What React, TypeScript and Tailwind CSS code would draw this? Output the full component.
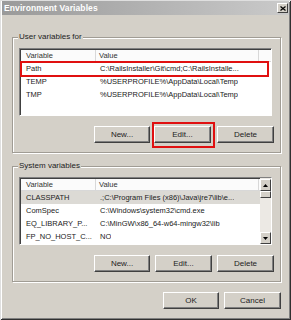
import React from "react";

const font = { fontFamily: '"Liberation Sans", Arial, sans-serif' };

function Btn({ label, w, className = "" }: { label: string; w: string; className?: string }) {
  return (
    <div
      className={`${w} h-[17px] flex items-center justify-center bg-[#d4d0c8] text-[8px] text-[#222] border border-t-white border-l-white border-r-[#404040] border-b-[#404040] shadow-[inset_-1px_-1px_0_#808080] ${className}`}
    >
      {label}
    </div>
  );
}

function ListBox({
  rows,
  selected,
  scroll,
  redBox,
}: {
  rows: [string, string][];
  selected?: number;
  scroll?: boolean;
  redBox?: boolean;
}) {
  return (
    <div className="relative w-[253px] h-[68px] bg-white border border-t-[#808080] border-l-[#808080] border-r-white border-b-white shadow-[inset_1px_1px_0_#404040] overflow-hidden flex">
      <div className="flex-1 flex flex-col pt-[1px] pl-[1px]">
        <div className="h-[12px] flex text-[7.5px] text-[#333] bg-[#fbfbfb] border-b border-[#d8d8d8]">
          <div className="w-[75px] pl-[5px] flex items-center border-r border-[#d8d8d8]">Variable</div>
          <div className="w-[163px] pl-[3px] flex items-center border-r border-[#d8d8d8]">Value</div>
          <div className="flex-1" />
        </div>
        {rows.map(([k, v], i) => (
          <div
            key={i}
            className={`h-[13px] flex items-center text-[7.5px] text-[#222] whitespace-nowrap ${
              selected === i ? "bg-[#dcdad5]" : ""
            }`}
          >
            <div className="w-[76px] pl-[5px] overflow-hidden">{k}</div>
            <div className="pl-[3px] overflow-hidden">{v}</div>
          </div>
        ))}
      </div>
      {scroll && (
        <div className="w-[11px] h-full bg-[#ece9e4] flex flex-col justify-between pt-[1px]">
          <div className="flex flex-col">
            <div className="h-[12px] bg-[#d4d0c8] border border-t-white border-l-white border-r-[#404040] border-b-[#404040] flex items-center justify-center">
              <svg width="5" height="3" viewBox="0 0 5 3"><path d="M2.5 0L5 3H0z" fill="#000" /></svg>
            </div>
            <div className="h-[7px] bg-[#d4d0c8] border border-t-white border-l-white border-r-[#404040] border-b-[#404040]" />
          </div>
          <div className="h-[12px] bg-[#d4d0c8] border border-t-white border-l-white border-r-[#404040] border-b-[#404040] flex items-center justify-center">
            <svg width="5" height="3" viewBox="0 0 5 3"><path d="M0 0H5L2.5 3z" fill="#000" /></svg>
          </div>
        </div>
      )}
      {redBox && (
        <div className="absolute left-0 top-[12px] w-[249px] h-[16px] border-2 border-[#e01010]" />
      )}
    </div>
  );
}

function Group({
  label,
  children,
}: {
  label: string;
  children: React.ReactNode;
}) {
  return (
    <div className="relative w-[269px] h-[116px] border border-[#a09c94] shadow-[inset_1px_1px_0_#fff,1px_1px_0_#fff] pl-[6px] pt-[10px]">
      <div className="absolute left-[5px] top-[-6px] px-[1px] bg-[#d4d0c8] text-[8px] leading-[10px] text-[#222]">
        {label}
      </div>
      {children}
    </div>
  );
}

export default function App() {
  return (
    <div
      style={font}
      className="w-[291px] h-[320px] bg-[#d4d0c8] flex flex-col p-[2px] pt-[1px] shadow-[inset_1px_1px_0_#dfdfdf,inset_-1px_-1px_0_#303030,inset_2px_2px_0_#fff,inset_-2px_-2px_0_#808080]"
    >
      <div className="h-[14px] flex items-center justify-between pl-[2px] pr-[1px] bg-gradient-to-r from-[#9a9a9a] to-[#cacaca]">
        <span className="text-[8.5px] font-bold text-white tracking-[0.1px]">Environment Variables</span>
        <div className="w-[11px] h-[10px] bg-[#d4d0c8] border border-t-white border-l-white border-r-[#404040] border-b-[#404040] flex items-center justify-center">
          <svg width="6" height="5" viewBox="0 0 6 5">
            <path d="M0.5 0.5L5.5 4.5M5.5 0.5L0.5 4.5" stroke="#000" strokeWidth="1.2" />
          </svg>
        </div>
      </div>
      <div className="flex flex-col pl-[10px]">
        <div className="mt-[22px]">
          <Group label="User variables for">
            <ListBox
              redBox
              rows={[
                ["Path", "C:\\RailsInstaller\\Git\\cmd;C:\\RailsInstalle..."],
                ["TEMP", "%USERPROFILE%\\AppData\\Local\\Temp"],
                ["TMP", "%USERPROFILE%\\AppData\\Local\\Temp"],
              ]}
            />
            <div className="flex mt-[10px] pl-[75px]">
              <Btn label="New..." w="w-[56px]" />
              <div className="relative ml-[4px]">
                <Btn label="Edit..." w="w-[57px]" />
                <div className="absolute -left-[2px] -right-[4px] -top-[4px] -bottom-[5px] border-2 border-[#e01010]" />
              </div>
              <Btn label="Delete" w="w-[57px]" className="ml-[6px]" />
            </div>
          </Group>
        </div>
        <div className="mt-[13px]">
          <Group label="System variables">
            <ListBox
              scroll
              selected={0}
              rows={[
                ["CLASSPATH", ".;C:\\Program Files (x86)\\Java\\jre7\\lib\\e..."],
                ["ComSpec", "C:\\Windows\\system32\\cmd.exe"],
                ["EQ_LIBRARY_P...", "C:\\MinGW\\x86_64-w64-mingw32\\lib"],
                ["FP_NO_HOST_C...", "NO"],
              ]}
            />
            <div className="flex mt-[10px] pl-[75px]">
              <Btn label="New..." w="w-[56px]" />
              <Btn label="Edit..." w="w-[57px]" className="ml-[5px]" />
              <Btn label="Delete" w="w-[57px]" className="ml-[5px]" />
            </div>
          </Group>
        </div>
        <div className="flex mt-[10px] pl-[151px] gap-[5px]">
          <Btn label="OK" w="w-[56px]" />
          <Btn label="Cancel" w="w-[57px]" />
        </div>
      </div>
    </div>
  );
}
